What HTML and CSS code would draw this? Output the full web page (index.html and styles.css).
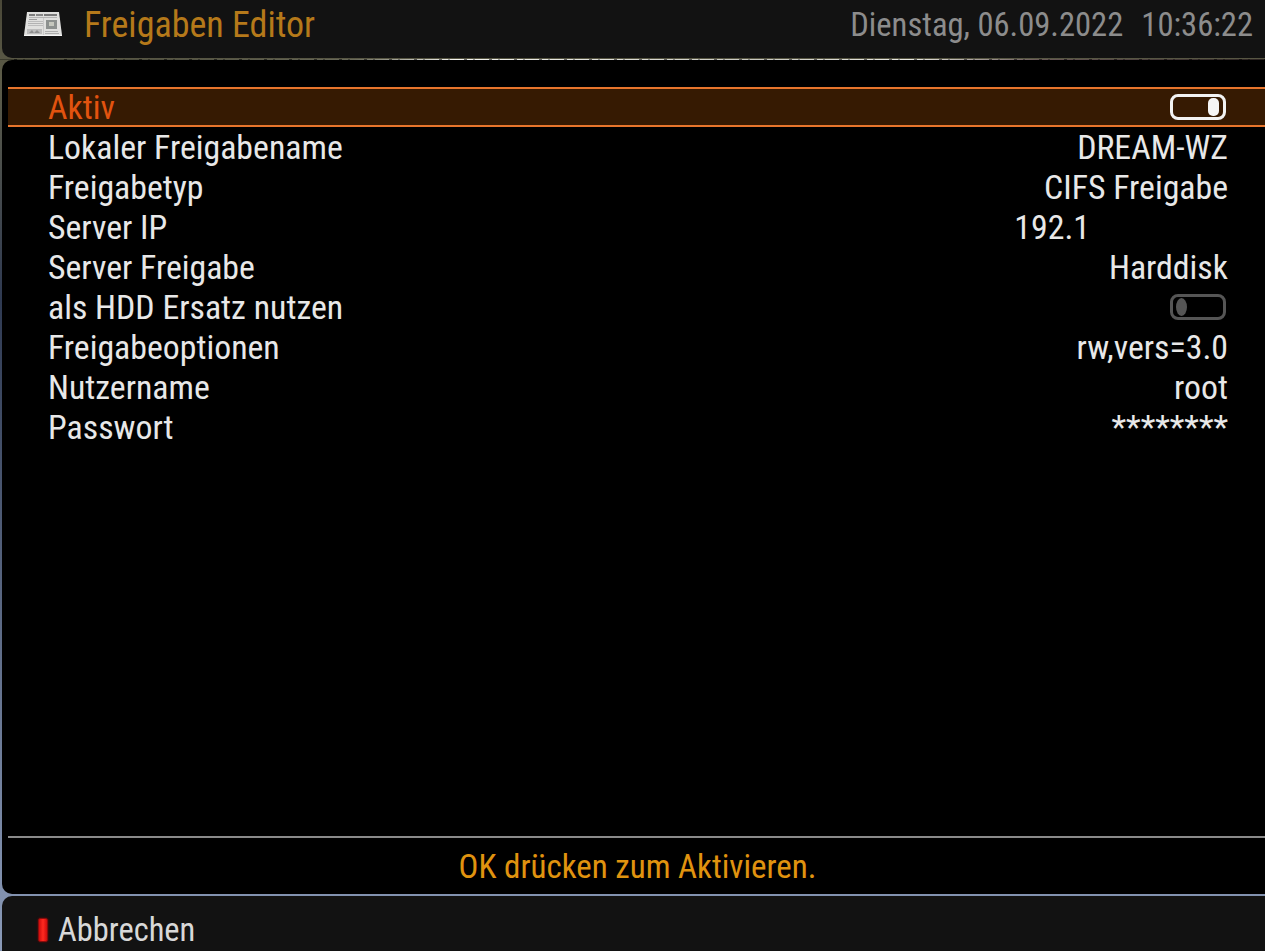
FILE: index.html
```html
<!DOCTYPE html>
<html lang="de">
  <head>
    <meta charset="UTF-8" />
    <title>Freigaben Editor</title>
    <link rel="stylesheet" href="styles.css">
  </head>
  <body>
    <header class="title-bar">
      <svg class="news-icon" width="38" height="25" viewBox="0 0 38 25">
        <path d="M3 1H35L38 24L37 25H1L0 24Z" fill="#e0e0de" />
        <rect x="5" y="3" width="6" height="2" fill="#7d7d7d" />
        <rect x="12" y="3" width="7" height="2" fill="#888" />
        <rect x="20" y="3" width="13" height="2" fill="#7a7a7a" />
        <rect x="5" y="6" width="28" height="1" fill="#b4b4b4" />
        <rect x="5" y="8" width="8" height="1" fill="#9b9b9b" />
        <rect x="4" y="10" width="15" height="1" fill="#bcbcbc" />
        <rect x="4" y="12" width="15" height="1" fill="#b2b2b2" />
        <rect x="4" y="14" width="15" height="1" fill="#bcbcbc" />
        <rect x="22" y="9" width="11" height="9" fill="#8d918f" />
        <rect x="25" y="11" width="5" height="4" fill="#c6c8be" />
        <rect x="3" y="18" width="15" height="5" fill="#bcbcbc" />
        <path d="M5 22L8 19L10 22L13 19L16 22Z" fill="#8e8e8e" />
        <rect x="21" y="20" width="13" height="1" fill="#aeaeae" />
        <rect x="21" y="22" width="14" height="1" fill="#aeaeae" />
        <rect x="0" y="24" width="38" height="1" fill="#f6f6f6" />
        <rect x="19" y="7" width="1" height="17" fill="#cacaca" />
      </svg>
      <h1 class="title">Freigaben Editor</h1>
      <div class="clock">
        <span>Dienstag, 06.09.2022</span>
        <span>10:36:22</span>
      </div>
    </header>
    <div class="seam"></div>

    <main class="panel">
      <ul class="config-list">
        <li class="config-row selected">
          <span class="label">Aktiv</span>
          <span class="toggle on"></span>
        </li>
        <li class="config-row">
          <span class="label">Lokaler Freigabename</span>
          <span class="value">DREAM-WZ</span>
        </li>
        <li class="config-row">
          <span class="label">Freigabetyp</span>
          <span class="value">CIFS Freigabe</span>
        </li>
        <li class="config-row">
          <span class="label">Server IP</span>
          <span class="value ip">192.1</span>
        </li>
        <li class="config-row">
          <span class="label">Server Freigabe</span>
          <span class="value">Harddisk</span>
        </li>
        <li class="config-row">
          <span class="label">als HDD Ersatz nutzen</span>
          <span class="toggle"></span>
        </li>
        <li class="config-row">
          <span class="label">Freigabeoptionen</span>
          <span class="value">rw,vers=3.0</span>
        </li>
        <li class="config-row">
          <span class="label">Nutzername</span>
          <span class="value">root</span>
        </li>
        <li class="config-row">
          <span class="label">Passwort</span>
          <span class="value">********</span>
        </li>
      </ul>
      <div class="help-text">OK drücken zum Aktivieren.</div>
    </main>

    <footer class="button-bar">
      <span class="red-key"></span>
      <span class="key-label">Abbrechen</span>
    </footer>
  </body>
</html>
```

FILE: styles.css
```css
html,
body {
  height: 100%;
}

body {
  margin: 0;
  height: 951px;
  overflow: hidden;
  display: flex;
  flex-direction: column;
  font-family: Roboto, "Liberation Sans", sans-serif;
  font-stretch: 75%;
  background: linear-gradient(#4a4838 0, #5d5c48 80px, #2f3a52 300px, #8a9ab8 951px);
}

.title-bar {
  height: 58px;
  margin-left: 2px;
  display: flex;
  align-items: center;
  background-color: #121212;
  border-radius: 0 0 0 10px;
}

.news-icon {
  margin-left: 22px;
  margin-bottom: 12px;
  flex: none;
}

.title {
  margin: 0 0 0 22px;
  padding-bottom: 8px;
  font-size: 36px;
  font-weight: 400;
  color: #b5791a;
}

.clock {
  margin-left: auto;
  margin-right: 12px;
  padding-bottom: 8px;
  display: flex;
  gap: 18px;
  font-size: 32.6px;
  color: #8c8c8c;
}

/* bright sliver of the picture behind the panels */
.seam {
  height: 1px;
  margin-top: 1px;
  background:
    repeating-linear-gradient(90deg, transparent 0 14px, rgba(0, 0, 0, 0.55) 14px 17px, transparent 17px 23px, rgba(0, 0, 0, 0.35) 23px 25px),
    linear-gradient(90deg, #3a3a2c 0, #6a6a5a 28%, #f4f4f0 36%, #c8c8c0 60%, #e8e8e2 72%, #6a5a58 82%, #2a2220 100%);
}

.panel {
  height: 834px;
  margin-left: 2px;
  display: flex;
  flex-direction: column;
  background-color: #000;
  border-radius: 10px 0 0 10px;
}

.config-list {
  list-style: none;
  margin: 27px 0 0 6px;
  padding: 0;
  flex: 1;
}

.config-row {
  height: 40px;
  box-sizing: border-box;
  padding: 0 37px 0 40px;
  display: flex;
  align-items: center;
  justify-content: space-between;
  font-size: 33.8px;
  color: #e8e8e8;
}

.config-row.selected {
  color: #e2530f;
  background-color: #361a02;
  border-top: 2px solid #e8752c;
  border-bottom: 2px solid #e8752c;
}

.value.ip {
  margin-right: 138px;
}

.toggle {
  position: relative;
  width: 56px;
  height: 26px;
  margin-right: 2px;
  box-sizing: border-box;
  border: 3px solid #555;
  border-radius: 8px;
}

.toggle::after {
  content: "";
  position: absolute;
  left: 3px;
  top: 1px;
  width: 11px;
  height: 18px;
  background-color: #555;
  border-radius: 50%;
}

.toggle.on {
  border-color: #f2f2f2;
}

.toggle.on::after {
  left: auto;
  right: 4px;
  background-color: #f5f5f5;
  border-radius: 5px;
}

.help-text {
  height: 56px;
  margin-left: 6px;
  padding-left: 2px;
  border-top: 2px solid #8a8a8a;
  display: flex;
  align-items: center;
  justify-content: center;
  font-size: 33px;
  color: #e0930f;
}

.button-bar {
  flex: 1;
  margin-top: 2px;
  margin-left: 2px;
  padding-left: 36px;
  padding-top: 12px;
  display: flex;
  align-items: center;
  gap: 10px;
  background-color: #121212;
  border-radius: 10px 0 0 0;
  font-size: 32.5px;
  color: #d8d8d8;
}

.red-key {
  width: 10px;
  height: 24px;
  background: linear-gradient(90deg, #d00c0c, #ff2a20 50%, #d00c0c);
  border: 1px solid #8a0c0c;
  border-radius: 2px;
  box-sizing: border-box;
  box-shadow: 0 0 2px #7a0808;
}
```
